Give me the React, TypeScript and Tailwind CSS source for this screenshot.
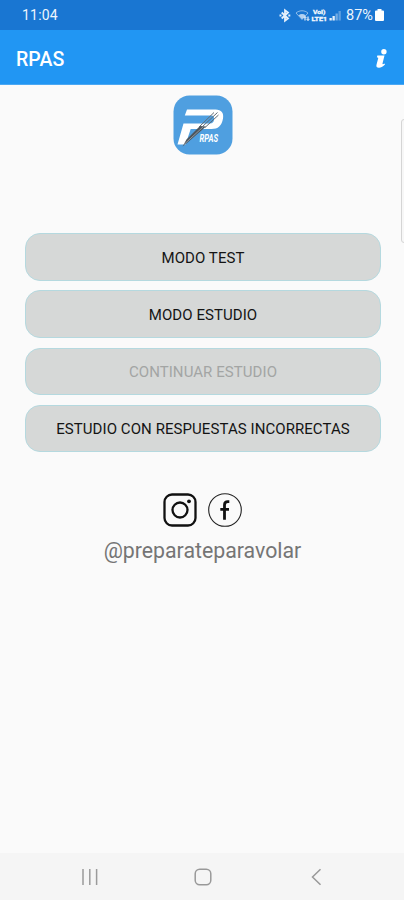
import clsx from 'clsx'

interface MenuItem {
  label: string
  disabled?: boolean
}

const MENU: MenuItem[] = [
  { label: 'MODO TEST' },
  { label: 'MODO ESTUDIO' },
  { label: 'CONTINUAR ESTUDIO', disabled: true },
  { label: 'ESTUDIO CON RESPUESTAS INCORRECTAS' },
]

function StatusIcons() {
  return (
    <svg width="64" height="16" viewBox="0 0 64 16" fill="none" stroke="#e6f0fb">
      {/* bluetooth */}
      <path d="M2.700 5.500l6.300 6L6 13.800V3.200L9 5.500l-6.300 6" strokeWidth="1.800" />
      <path d="M0.500 8.500h2M9.300 8.500h2" strokeWidth="2" />
      {/* wifi */}
      <path d="M17 6c3.500-3 8.500-3 12 0L23 12.500z" strokeWidth="1" opacity="0.55" />
      <path d="M19.500 8.300c2-1.600 5-1.600 7 0L23 12.300z" fill="#e6f0fb" stroke="none" opacity="0.75" />
      <path d="M26 9.500v4M29 13.500V9.500" strokeWidth="1.200" />
      <path d="M24.500 11.100l1.500-1.600 1.500 1.600M27.500 11.900l1.500 1.600 1.500-1.600" strokeWidth="1" />
      <g fill="#f1f7fd" stroke="#f1f7fd" strokeWidth="0.3" fontFamily="Roboto, sans-serif" fontWeight="700">
        <text x="34" y="7.200" fontSize="5.500" textLength="12.500" lengthAdjust="spacingAndGlyphs">VoI)</text>
        <text x="32.500" y="13.800" fontSize="5.500" textLength="15.500" lengthAdjust="spacingAndGlyphs">LTE1</text>
      </g>
      {/* signal */}
      <g fill="#e6f0fb" stroke="none">
        <rect x="50.500" y="11" width="2.300" height="2.500" />
        <rect x="53.500" y="9" width="2.300" height="4.500" />
        <rect x="56.500" y="6.500" width="2.300" height="7" opacity="0.45" />
        <rect x="59.500" y="4" width="2.300" height="9.500" opacity="0.35" />
      </g>
    </svg>
  )
}

function StatusBar() {
  return (
    <div className="flex h-[30px] items-center justify-between bg-[#1976d2] pr-5 pl-[22px] text-sm text-[#edf5fd]">
      <span className="tracking-[0.2px]">11:04</span>
      <div className="flex items-center">
        <StatusIcons />
        <span className="ml-[3px] w-[29px] pt-[2px] text-[14.5px]">87%</span>
        <svg className="mt-px" width="9" height="12" viewBox="0 0 9 12" fill="#fff">
          <path d="M2.500 0h4v1.500H8a1 1 0 0 1 1 1V11a1 1 0 0 1-1 1H1a1 1 0 0 1-1-1V2.500a1 1 0 0 1 1-1h1.500z" />
        </svg>
      </div>
    </div>
  )
}

function AppBar() {
  return (
    <header className="flex h-[55px] items-center justify-between border-b border-[#4ba8f3] bg-[#2196f3] pr-[17px] pl-4 text-white">
      <h1 className="pt-[6px] text-[19.5px] font-medium tracking-[0.1px]">RPAS</h1>
      <button type="button" aria-label="Información" className="pt-0.5">
        <svg width="11" height="19" viewBox="0 0 11 19" fill="#fff">
          <circle cx="7.900" cy="2.700" r="2.700" />
          <path d="M1.300 6.500h7.200L6.500 14.500c-.2.900.7.900 2-.1l.5 1.200C6.500 18 4.600 18.900 2.900 18.800.8 18.700 0 17.500.5 15.700L2.200 9.300c.2-.8-.2-1-1.300-.9z" />
        </svg>
      </button>
    </header>
  )
}

function Logo() {
  return (
    <svg width="60" height="60" viewBox="0 0 60 60">
      <rect x="0.500" y="0.500" width="59" height="59" rx="16" fill="#4f9fe0" />
      <path
        d="M14 14.500h28.500c6 0 8.500 3.500 7.500 9-1.200 7.500-5 10.500-11.500 10.500H17.700L12.500 49.500H4.500L10.500 28.500H37c2.400 0 3.600-1.200 4-3.800.4-2.700-.5-4.200-2.800-4.200H11.800z"
        fill="#fff"
      />
      <path d="M9.500 51.500l4-7L27 31l6 .5L14 48z" fill="#4d555c" />
      <path d="M11 49.500L30 32" stroke="#a9b8c4" strokeWidth="0.7" />
      <path d="M26 32l15-14.500M29 32l15.500-14.500M32 32.500L45.500 20" stroke="#616b74" strokeWidth="1" />
      <text
        x="26.500"
        y="46.500"
        fill="#fff"
        fontFamily="Roboto, sans-serif"
        fontSize="10"
        fontStyle="italic"
        fontWeight="700"
        textLength="18.500"
        lengthAdjust="spacingAndGlyphs"
      >
        RPAS
      </text>
    </svg>
  )
}

function MenuButton({ label, disabled }: MenuItem) {
  return (
    <button
      type="button"
      disabled={disabled}
      className={clsx(
        'h-[47.5px] w-full rounded-[15px] border border-[#b5d9df] bg-[#d6d8d7] pt-[2px] text-[15px] tracking-[0.07px]',
        disabled ? 'text-[#a3a5a4]' : 'text-[#141414]',
      )}
    >
      {label}
    </button>
  )
}

function SocialLinks() {
  return (
    <div className="flex items-center gap-[11px]">
      <svg width="34" height="34" viewBox="0 0 34 34" fill="none" stroke="#111">
        <rect x="1.500" y="1.500" width="31" height="31" rx="7.500" strokeWidth="2.300" />
        <circle cx="17" cy="17" r="7.500" strokeWidth="2.300" />
        <circle cx="26" cy="8.300" r="1.900" fill="#111" stroke="none" />
      </svg>
      <svg width="34" height="34" viewBox="0 0 34 34" fill="none" stroke="#222">
        <circle cx="17" cy="17" r="16.300" strokeWidth="1.100" />
        <path d="M21.300 8.700h-1.500c-2.200 0-3.300 1-3.300 3.200V26.800M12.300 16.300h8.700" stroke="#111" strokeWidth="2.800" />
      </svg>
    </div>
  )
}

function NavBar() {
  return (
    <nav className="flex h-[47px] items-center justify-between bg-[#f5f5f5] pr-[82px] pl-[81px]">
      <svg width="18" height="18" viewBox="0 0 18 18" stroke="#9b9b9b" strokeWidth="1.500">
        <path d="M2 1v16M8.800 1v16M15.600 1v16" />
      </svg>
      <svg className="-ml-1" width="18" height="18" viewBox="0 0 18 18" fill="none" stroke="#999" strokeWidth="1.500">
        <rect x="1.200" y="1.200" width="15.600" height="15.600" rx="4.500" />
      </svg>
      <svg width="11" height="18" viewBox="0 0 11 18" fill="none" stroke="#999" strokeWidth="1.500">
        <path d="M9.500 1.200L1.500 9l8 7.800" />
      </svg>
    </nav>
  )
}

export default function App() {
  return (
    <div className="relative flex h-[900px] w-[404px] flex-col overflow-hidden bg-[#fafafa] font-['Roboto',sans-serif]">
      <StatusBar />
      <AppBar />
      <main className="flex flex-1 flex-col items-center pr-[23px] pl-[25px] pt-[10px]">
        <Logo />
        <div className="mt-[78px] flex w-full flex-col gap-[9.8px]">
          {MENU.map((item) => (
            <MenuButton key={item.label} {...item} />
          ))}
        </div>
        <div className="mt-[41px] mr-[2px]">
          <SocialLinks />
        </div>
        <p className="mt-2 mr-px text-[21.3px] leading-8 text-[#757575]">@preparateparavolar</p>
      </main>
      <NavBar />
      {/* edge panel handle */}
      <div className="absolute top-[119px] -right-1 h-[124px] w-[7px] rounded-l-[3px] border border-[#d5d5d5] bg-[#f7f7f7]" />
    </div>
  )
}
